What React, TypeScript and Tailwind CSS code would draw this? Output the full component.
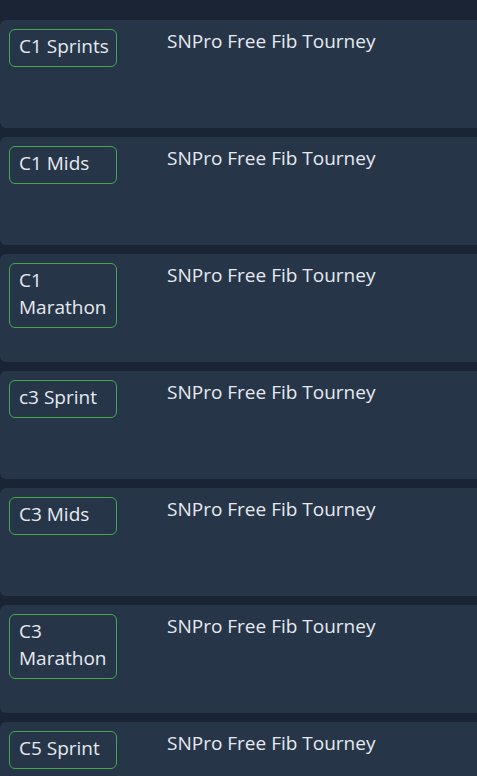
const events = [
  "C1 Sprints",
  "C1 Mids",
  "C1 Marathon",
  "c3 Sprint",
  "C3 Mids",
  "C3 Marathon",
  "C5 Sprint",
];

export default function App() {
  return (
    <div
      className="h-screen overflow-hidden bg-[#1b2434] pt-5 text-[#e6eaef]"
      style={{ fontFamily: '"Open Sans", "Liberation Sans", sans-serif' }}
    >
      <div className="flex flex-col gap-[9px]">
        {events.map((name) => (
          <div
            key={name}
            className="flex h-[108px] shrink-0 items-start rounded-l-md bg-[#273548] p-[9px]"
          >
            <div className="w-[108px] shrink-0 rounded-md border border-[#45a84f] pb-[6px] pl-[9px] pr-[6px] pt-[3px] text-[19px] leading-[27px]">
              {name}
            </div>
            <div className="-mt-px ml-[50px] text-[19px] leading-[27px]">
              SNPro Free Fib Tourney
            </div>
          </div>
        ))}
      </div>
    </div>
  );
}
